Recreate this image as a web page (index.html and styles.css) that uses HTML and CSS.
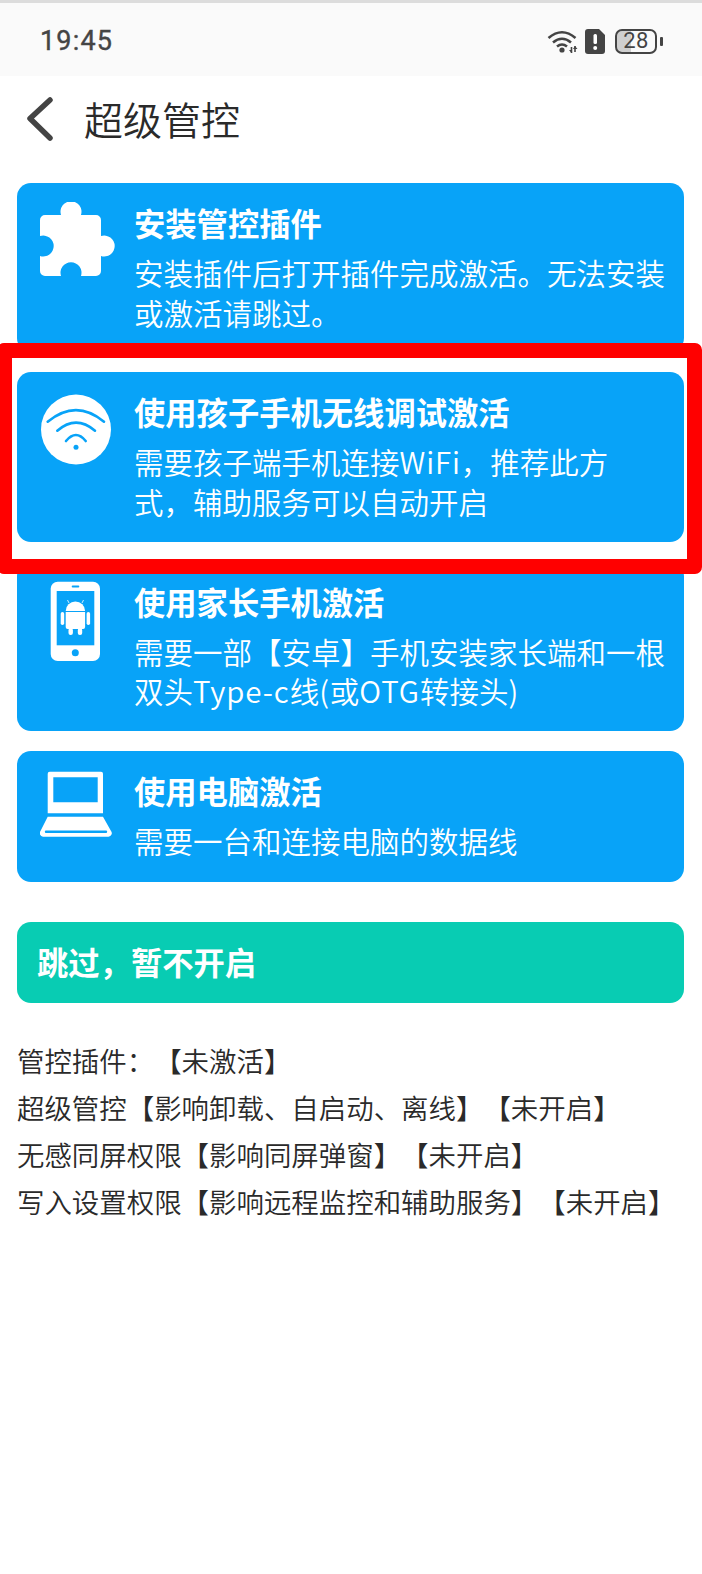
FILE: index.html
```html
<!DOCTYPE html>
<html lang="zh-CN">

<head>
    <meta charset="UTF-8">
    <meta name="viewport" content="width=device-width, initial-scale=1.0">
    <title>超级管控</title>
    <link rel="stylesheet" href="styles.css">
</head>

<body>
    <div class="status_bar">
        <span class="status_bar-time">19:45</span>
        <div class="status_bar-icons">
            <svg class="status_bar-wifi" width="31" height="24" viewBox="0 0 31 24" fill="none" stroke="#444" stroke-width="2.6">
                <path d="M1.5 9 Q15 -2.5 28.5 9" />
                <path d="M6 13.5 Q15 6 24 13.5" />
                <path d="M10 17.5 Q15 13.5 20 17.5" />
                <circle cx="15" cy="21" r="2.6" fill="#444" stroke="none" />
                <path d="M24.5 18 V24 M28 17 V23" stroke-width="1.6" />
                <path d="M22 21 L24.5 24 L24.5 21z M26 20 L28 17 L30.500 20z" fill="#444" stroke="none" />
            </svg>
            <svg class="status_bar-alert" width="20" height="25" viewBox="0 0 20 25">
                <path d="M3 0 H14 L20 6 V22 a3 3 0 0 1-3 3 H3 a3 3 0 0 1-3-3 V3 a3 3 0 0 1 3-3z" fill="#444" />
                <rect x="8.500" y="5" width="3.500" height="10" rx="1.500" fill="#fff" />
                <circle cx="10.200" cy="19" r="2" fill="#fff" />
            </svg>
            <div class="battery">
                <span class="battery-level">28</span>
            </div>
            <span class="battery-nub"></span>
        </div>
    </div>

    <header class="header">
        <svg class="header-back" width="26" height="44" viewBox="0 0 26 44" fill="none" stroke="#444" stroke-width="5.500" stroke-linecap="round" stroke-linejoin="round">
            <path d="M23 3 L3 21.500 L23 41" />
        </svg>
        <h1 class="header-title">超级管控</h1>
    </header>

    <main class="main">
        <div class="card">
            <svg class="card-icon" width="76" height="80" viewBox="0 0 76 80" fill="#fff">
                <path d="M5 13 H21 A10.500 10.500 0 1 1 41 13 H56 a5 5 0 0 1 5 5 V34 A10.500 10.500 0 1 1 61 54 V69 a5 5 0 0 1-5 5 H41 A10.500 10.500 0 1 0 21 74 H5 a5 5 0 0 1-5-5 V54 A10.500 10.500 0 1 0 0 34 V18 a5 5 0 0 1 5-5z" />
            </svg>
            <div class="card-text">
                <h2 class="card-title">安装管控插件</h2>
                <p class="card-desc">安装插件后打开插件完成激活。无法安装<br>或激活请跳过。</p>
            </div>
        </div>

        <div class="card">
            <svg class="card-icon" width="76" height="80" viewBox="0 0 76 80" fill="none">
                <circle cx="36" cy="38.500" r="35" fill="#fff" />
                <g stroke="#08a3f8" stroke-width="2.600" stroke-linecap="round">
                    <path d="M7.700 30.700 Q36 7.500 64 30.700" />
                    <path d="M17.300 39.700 Q36 23.500 55 39.700" />
                    <path d="M26 50 Q36 38 45.700 50" />
                </g>
                <circle cx="36" cy="56.300" r="2.500" fill="#08a3f8" />
            </svg>
            <div class="card-text">
                <h2 class="card-title">使用孩子手机无线调试激活</h2>
                <p class="card-desc">需要孩子端手机连接<span class="latin">WiFi</span>，推荐此方<br>式，辅助服务可以自动开启</p>
            </div>
        </div>

        <div class="card">
            <svg class="card-icon" width="76" height="80" viewBox="0 0 76 80" fill="#fff">
                <rect x="10.700" y="0.700" width="49.300" height="79.300" rx="7" />
                <rect x="16.700" y="10" width="37.600" height="54.300" fill="#08a3f8" />
                <rect x="31.700" y="4.500" width="7.600" height="2" rx="1" fill="#08a3f8" />
                <circle cx="35.300" cy="71.700" r="3.500" fill="#08a3f8" />
                <path d="M25.700 30 a9.700 9.500 0 0 1 19.400 0z" />
                <path d="M25.700 31 H45.100 V46 a2 2 0 0 1-2 2 H27.700 a2 2 0 0 1-2-2z" />
                <rect x="20.700" y="31" width="3.500" height="13" rx="1.700" />
                <rect x="46.600" y="31" width="3.500" height="13" rx="1.700" />
                <rect x="28.500" y="47" width="4.400" height="7" rx="2" />
                <rect x="37.800" y="47" width="4.400" height="7" rx="2" />
                <path d="M29 22 L27.500 19 M42 22 L43.500 19" stroke="#fff" stroke-width="0.800" />
            </svg>
            <div class="card-text">
                <h2 class="card-title">使用家长手机激活</h2>
                <p class="card-desc">需要一部【安卓】手机安装家长端和一根<br>双头<span class="latin">Type-c</span>线<span class="latin">(</span>或<span class="latin">OTG</span>转接头<span class="latin">)</span></p>
            </div>
        </div>

        <div class="card card-single">
            <svg class="card-icon" width="76" height="80" viewBox="0 0 76 80" fill="#fff">
                <path fill-rule="evenodd" d="M10 1.700 H61 a2 2 0 0 1 2 2 V43.300 H7.700 V3.700 a2 2 0 0 1 2-2z M13.300 7.300 V32.300 H57.700 V7.300z" />
                <rect x="31.700" y="36.600" width="7.500" height="1.800" rx="0.900" fill="#fff" />
                <path fill-rule="evenodd" d="M7.700 46.700 H63 L71 61 a3.500 3.500 0 0 1-2.500 5.700 H3 a3.500 3.500 0 0 1-2.500-5.700z M6 60.500 a1.200 1.200 0 0 0 0 2.400 H66 a1.200 1.200 0 0 0 0-2.400z" />
            </svg>
            <div class="card-text">
                <h2 class="card-title">使用电脑激活</h2>
                <p class="card-desc">需要一台和连接电脑的数据线</p>
            </div>
        </div>

        <div class="skip_button">跳过，暂不开启</div>

        <div class="status_list">
            <div>管控插件：【未激活】</div>
            <div>超级管控【影响卸载、自启动、离线】【未开启】</div>
            <div>无感同屏权限【影响同屏弹窗】【未开启】</div>
            <div>写入设置权限【影响远程监控和辅助服务】【未开启】</div>
        </div>
    </main>

    <!-- red box marking the recommended option -->
    <div class="highlight"></div>
</body>

</html>
```

FILE: styles.css
```css
body {
    margin: 0;
    padding: 0;
    position: relative;
    overflow: hidden;
    height: 1574px;
    background: #fff;
    color: #2a2a2a;
    font-family: "Noto Sans CJK SC", "Noto Sans", sans-serif;
    font-weight: 350;
    text-spacing-trim: space-all;
}

h1,
h2,
p {
    margin: 0;
}

.status_bar {
    display: flex;
    align-items: center;
    justify-content: space-between;
    box-sizing: border-box;
    height: 76px;
    padding: 3px 39px 0 40px;
    background: #fafafa;
    border-top: 3px solid #dcdcdc;
}

.status_bar-time {
    font-family: Roboto, sans-serif;
    font-size: 27px;
    font-weight: 400;
    letter-spacing: 1.2px;
    color: #444;
    -webkit-text-stroke: 0.4px #444;
}

.status_bar-icons {
    display: flex;
    align-items: center;
    gap: 7px;
}

.battery {
    display: flex;
    align-items: center;
    justify-content: center;
    box-sizing: border-box;
    width: 42px;
    height: 25px;
    margin-left: 3px;
    border: 2px solid #444;
    border-radius: 7px;
    background: linear-gradient(to right, #cfcfcf 37%, transparent 37%);
}

.battery-level {
    font-family: Roboto, sans-serif;
    font-size: 22px;
    font-weight: 400;
    letter-spacing: 0.5px;
    line-height: 1;
    color: #444;
}

.battery-nub {
    width: 3px;
    height: 9px;
    margin-left: -4px;
    border-radius: 1px;
    background: #444;
}

.header {
    display: flex;
    align-items: center;
    gap: 31px;
    height: 88px;
    padding-left: 27px;
}

.header-back {
    margin-bottom: 2px;
}

.header-title {
    padding-bottom: 4px;
    font-size: 39px;
    font-weight: 350;
    line-height: 1;
}

.main {
    display: flex;
    flex-direction: column;
    gap: 20px;
    padding: 19px 18px 0 17px;
}

.card {
    display: flex;
    gap: 18px;
    padding: 19px 18px 20.300px 23px;
    border-radius: 14px;
    background: #08a3f8;
    color: #fff;
}

.card-single {
    padding-bottom: 21.300px;
}

.card-icon {
    flex: none;
}

.card-text {
    padding-top: 1px;
}

.card-title {
    font-size: 31.300px;
    font-weight: 700;
    line-height: 40px;
    margin-bottom: 10px;
}

.card-desc {
    font-size: 29.500px;
    line-height: 39.500px;
}

.latin {
    letter-spacing: 0.9px;
}

.skip_button {
    margin-top: 20px;
    padding: 19px 20px 21px 20px;
    border-radius: 14px;
    background: #08ccb3;
    color: #fff;
    font-size: 31.300px;
    font-weight: 700;
    line-height: 41px;
}

.status_list {
    margin-top: 14px;
    font-size: 27.450px;
    line-height: 47px;
}

.highlight {
    position: absolute;
    top: 343px;
    left: -3px;
    box-sizing: border-box;
    width: 705px;
    height: 231px;
    border: 15px solid #ff0000;
    border-radius: 7px;
}
```
